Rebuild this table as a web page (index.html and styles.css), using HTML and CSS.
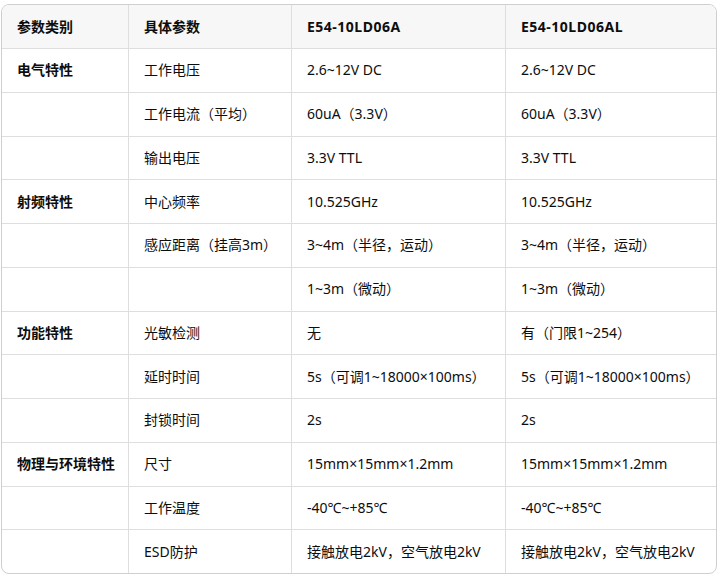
FILE: index.html
```html
<!DOCTYPE html>
<html lang="zh">
<head>
<meta charset="utf-8">
<link rel="stylesheet" href="styles.css">
</head>
<body>
<div class="wrap">
<table class="spec">
<colgroup>
<col class="c1"><col class="c2"><col class="c3"><col class="c4">
</colgroup>
<thead>
<tr><th>参数类别</th><th>具体参数</th><th class="model">E54-10LD06A</th><th class="model">E54-10LD06AL</th></tr>
</thead>
<tbody>
<tr><td class="cat">电气特性</td><td>工作电压</td><td>2.6~12V DC</td><td>2.6~12V DC</td></tr>
<tr><td></td><td>工作电流（平均）</td><td>60uA（3.3V）</td><td>60uA（3.3V）</td></tr>
<tr><td></td><td>输出电压</td><td>3.3V TTL</td><td>3.3V TTL</td></tr>
<tr><td class="cat">射频特性</td><td>中心频率</td><td>10.525GHz</td><td>10.525GHz</td></tr>
<tr><td></td><td>感应距离（挂高3m）</td><td>3~4m（半径，运动）</td><td>3~4m（半径，运动）</td></tr>
<tr><td></td><td></td><td>1~3m（微动）</td><td>1~3m（微动）</td></tr>
<tr><td class="cat">功能特性</td><td>光敏检测</td><td>无</td><td>有（门限1~254）</td></tr>
<tr><td></td><td>延时时间</td><td>5s（可调1~18000×100ms）</td><td>5s（可调1~18000×100ms）</td></tr>
<tr><td></td><td>封锁时间</td><td>2s</td><td>2s</td></tr>
<tr><td class="cat">物理与环境特性</td><td>尺寸</td><td>15mm×15mm×1.2mm</td><td>15mm×15mm×1.2mm</td></tr>
<tr><td></td><td>工作温度</td><td>-40℃~+85℃</td><td>-40℃~+85℃</td></tr>
<tr><td></td><td>ESD防护</td><td>接触放电2kV，空气放电2kV</td><td>接触放电2kV，空气放电2kV</td></tr>
</tbody>
</table>
</div>
</body>
</html>
```
FILE: styles.css
```css
html, body {
  margin: 0;
  padding: 0;
  background: #ffffff;
}
body {
  padding: 4px 6px 0 1px;
  font-family: "Noto Sans", "Noto Sans CJK SC", sans-serif;
  font-size: 14px;
  color: #0d0d0d;
}
.wrap {
  width: 716px;
  border: 1px solid #cfcfcf;
  border-radius: 8px;
  overflow: hidden;
  box-sizing: border-box;
}
.spec {
  width: 100%;
  border-collapse: separate;
  border-spacing: 0;
  table-layout: fixed;
}
.c1 { width: 127px; }
.c2 { width: 163px; }
.c3 { width: 214px; }
.c4 { width: 210px; }
.spec th, .spec td {
  text-align: left;
  padding: 0 0 0 15px;
  border-right: 1px solid #dedede;
  border-bottom: 1px solid #dedede;
  white-space: nowrap;
  vertical-align: middle;
  line-height: 20px;
}
.spec th {
  height: 43px;
  background: #f7f7f7;
  font-weight: 700;
}
.spec th.model { letter-spacing: 0.5px; }
.spec td {
  height: 42.75px;
}
.spec tr > :last-child { border-right: none; }
.spec tbody tr:last-child td { border-bottom: none; }
.spec td.cat { font-weight: 700; }
```
